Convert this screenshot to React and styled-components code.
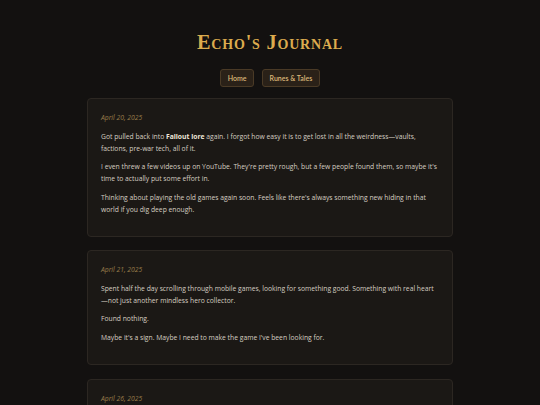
import styled, { createGlobalStyle } from "styled-components";

const GlobalStyle = createGlobalStyle`
  html, body {
    margin: 0;
    padding: 0;
    background: #131110;
  }
  body {
    font-family: "Open Sans", "Liberation Sans", sans-serif;
    color: #d6cec2;
  }
`;

const Page = styled.main`
  min-height: 405px;
  padding: 29px 0 40px;
  box-sizing: border-box;
`;

const Header = styled.header`
  display: flex;
  flex-direction: column;
  align-items: center;
  gap: 13px;
  margin-bottom: 11px;
`;

const Title = styled.h1`
  margin: 0;
  font-family: "Liberation Serif", "DejaVu Serif", serif;
  font-variant: small-caps;
  font-weight: 700;
  font-size: 20.3px;
  line-height: 27px;
  letter-spacing: 0.8px;
  color: #dcab4e;
`;

const Nav = styled.nav`
  display: flex;
  gap: 8px;
`;

const NavButton = styled.a`
  display: inline-flex;
  align-items: center;
  height: 18px;
  padding: 0 6.5px;
  box-sizing: border-box;
  border: 1px solid #4a3a26;
  border-radius: 3px;
  background: #2a2118;
  color: #dcb878;
  font-family: Lato, "Open Sans", sans-serif;
  font-size: 7px;
  font-weight: 600;
  text-decoration: none;
`;

const Feed = styled.section`
  width: 366px;
  margin: 0 auto;
  display: flex;
  flex-direction: column;
  gap: 13.5px;
`;

const Card = styled.article`
  background: #1b1815;
  border: 1px solid #2c2722;
  border-radius: 4px;
  padding: 13px 12px 13.5px 13px;
`;

const EntryDate = styled.div`
  font-size: 6.75px;
  line-height: 12px;
  font-style: italic;
  color: #9a7d4a;
  margin-bottom: 6.5px;
`;

const Para = styled.p`
  margin: 0 0 6.6px;
  font-size: 6.75px;
  line-height: 12px;
  color: #d6cec2;

  strong {
    color: #efe7d9;
    font-weight: 700;
  }
`;

const entries = [
  {
    date: "April 20, 2025",
    paras: [
      <>
        Got pulled back into <strong>Fallout lore</strong> again. I forgot how
        easy it is to get lost in all the weirdness—vaults, factions, pre-war
        tech, all of it.
      </>,
      "I even threw a few videos up on YouTube. They're pretty rough, but a few people found them, so maybe it's time to actually put some effort in.",
      "Thinking about playing the old games again soon. Feels like there's always something new hiding in that world if you dig deep enough.",
    ],
  },
  {
    date: "April 21, 2025",
    paras: [
      "Spent half the day scrolling through mobile games, looking for something good. Something with real heart—not just another mindless hero collector.",
      "Found nothing.",
      "Maybe it's a sign. Maybe I need to make the game I've been looking for.",
    ],
  },
  {
    date: "April 26, 2025",
    paras: [
      "Started sketching out some ideas. Nothing fancy yet, just rough notes and a few names that feel right.",
    ],
  },
];

export default function App() {
  return (
    <>
      <GlobalStyle />
      <Page>
        <Header>
          <Title>Echo's Journal</Title>
          <Nav>
            <NavButton href="#">Home</NavButton>
            <NavButton href="#">Runes &amp; Tales</NavButton>
          </Nav>
        </Header>
        <Feed>
          {entries.map((entry, i) => (
            <Card key={i}>
              <EntryDate>{entry.date}</EntryDate>
              {entry.paras.map((p, j) => (
                <Para key={j}>{p}</Para>
              ))}
            </Card>
          ))}
        </Feed>
      </Page>
    </>
  );
}
